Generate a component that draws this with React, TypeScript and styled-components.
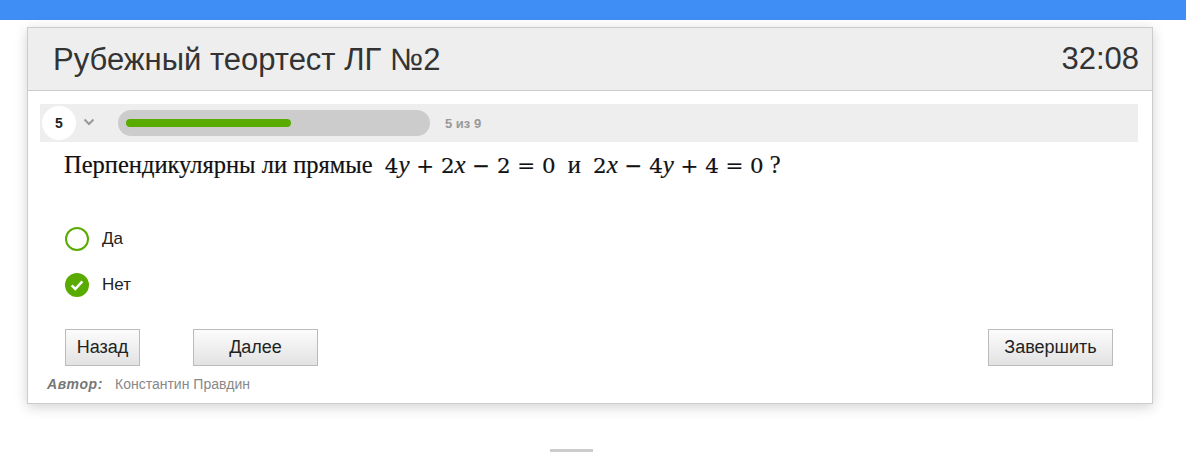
import React from 'react';
import styled, { createGlobalStyle } from 'styled-components';

const GlobalStyle = createGlobalStyle`
  body {
    margin: 0;
    background: #fff;
    font-family: "Liberation Sans", Arial, sans-serif;
  }
`;

const options = [
  { label: 'Да', checked: false },
  { label: 'Нет', checked: true },
];

const App: React.FC = () => {
  const current = 5;
  const total = 9;
  return (
    <>
      <GlobalStyle />
      <TopBar />
      <Page>
        <Card>
          <Header>
            <Title>Рубежный теортест ЛГ №2</Title>
            <Timer>32:08</Timer>
          </Header>
          <Body>
            <ProgressRow>
              <Badge>{current}</Badge>
              <Chevron viewBox="0 0 12 8" width="12" height="8">
                <path d="M1.5 1.5 L6 6 L10.5 1.5" fill="none" stroke="#999" strokeWidth="2" />
              </Chevron>
              <Track>
                <Fill style={{ width: `${(165 / 296) * 100}%` }} />
              </Track>
              <Counter>
                {current} из {total}
              </Counter>
            </ProgressRow>
            <Question>
              Перпендикулярны ли прямые&nbsp;&nbsp;<Formula>4<I>y</I> + 2<I>x</I> − 2 = 0</Formula>
              &nbsp;&nbsp;и&nbsp;&nbsp;<Formula>2<I>x</I> − 4<I>y</I> + 4 = 0</Formula>&nbsp;?
            </Question>
            <Options>
              {options.map((o) => (
                <Option key={o.label}>
                  <Radio checked={o.checked}>
                    {o.checked && (
                      <svg viewBox="0 0 24 24" width="16" height="16">
                        <path d="M4 12.5 L9.5 18 L20 6.5" fill="none" stroke="#fff" strokeWidth="3.8" />
                      </svg>
                    )}
                  </Radio>
                  <OptionLabel>{o.label}</OptionLabel>
                </Option>
              ))}
            </Options>
            <Buttons>
              <Button width={75}>Назад</Button>
              <Button width={125}>Далее</Button>
              <Spacer />
              <Button width={125}>Завершить</Button>
            </Buttons>
            <Author>
              <AuthorLabel>Автор:</AuthorLabel>
              <span>Константин Правдин</span>
            </Author>
          </Body>
        </Card>
        <Dash />
      </Page>
    </>
  );
};

export default App;

const TopBar = styled.div`
  height: 20px;
  background: #3f8ef5;
`;

const Page = styled.div`
  padding: 7px 0 0 27px;
  display: flex;
  flex-direction: column;
`;

const Card = styled.div`
  width: 1124px;
  border: 1px solid #ccc;
  background: #fff;
  box-shadow: 0 3px 12px rgba(0, 0, 0, 0.18);
`;

const Header = styled.div`
  height: 62px;
  background: #eee;
  border-bottom: 1px solid #ccc;
  display: flex;
  align-items: center;
  justify-content: space-between;
  padding: 0 13px 0 25px;
`;

const Title = styled.div`
  font-size: 31px;
  color: #333;
  padding-top: 2px;
`;

const Timer = styled.div`
  font-size: 31px;
  color: #333;
`;

const Body = styled.div`
  padding: 13px 14px 0 12px;
`;

const ProgressRow = styled.div`
  height: 38px;
  background: #eee;
  display: flex;
  align-items: center;
`;

const Badge = styled.div`
  width: 34px;
  height: 34px;
  margin-left: 2px;
  border-radius: 50%;
  background: #fff;
  display: flex;
  align-items: center;
  justify-content: center;
  font-weight: bold;
  font-size: 14px;
  color: #222;
`;

const Chevron = styled.svg`
  margin-left: 7px;
  margin-top: -3px;
`;

const Track = styled.div`
  margin-left: 23px;
  width: 296px;
  height: 26px;
  padding: 0 8px;
  border-radius: 13px;
  background: #ccc;
  display: flex;
  align-items: center;
`;

const Fill = styled.div`
  height: 8px;
  border-radius: 4px;
  background: #5aab00;
`;

const Counter = styled.div`
  margin-left: 15px;
  font-size: 13px;
  font-weight: bold;
  color: #999;
`;

const Question = styled.div`
  font-family: "Liberation Serif", "Times New Roman", serif;
  font-size: 24.5px;
  color: #111;
  padding: 9px 0 0 24px;
  height: 43px;
  white-space: nowrap;
  -webkit-text-stroke: 0.2px #111;
`;

const Formula = styled.span`
  font-family: "DejaVu Serif", "Liberation Serif", serif;
  font-size: 21.3px;
`;

const I = styled.i`
  font-family: "Liberation Serif", serif;
  font-size: 25px;
`;

const Options = styled.div`
  display: flex;
  flex-direction: column;
  gap: 22px;
  padding: 33px 0 0 25px;
`;

const Option = styled.div`
  display: flex;
  align-items: center;
  height: 24px;
`;

const Radio = styled.div<{ checked: boolean }>`
  width: 24px;
  height: 24px;
  box-sizing: border-box;
  border-radius: 50%;
  border: 2px solid #5aab00;
  background: ${(p) => (p.checked ? '#5aab00' : '#fff')};
  display: flex;
  align-items: center;
  justify-content: center;
`;

const OptionLabel = styled.div`
  margin-left: 13px;
  font-size: 17px;
  color: #222;
`;

const Buttons = styled.div`
  display: flex;
  gap: 53px;
  padding: 32px 25px 0 25px;
`;

const Spacer = styled.div`
  flex: 1;
`;

const Button = styled.button<{ width: number }>`
  width: ${(p) => p.width}px;
  height: 37px;
  border: 1px solid #bbb;
  background: linear-gradient(#fcfcfc, #e2e2e2);
  font-family: "Liberation Sans", Arial, sans-serif;
  font-size: 18px;
  color: #222;
  padding: 0;
`;

const Author = styled.div`
  display: flex;
  gap: 12px;
  padding: 10px 0 11px 7px;
  font-size: 14px;
  color: #888;
`;

const AuthorLabel = styled.span`
  font-weight: bold;
  font-style: italic;
  letter-spacing: 0.6px;
  color: #777;
`;

const Dash = styled.div`
  margin: 45px 0 0 523px;
  width: 43px;
  height: 3px;
  background: #ccc;
`;
